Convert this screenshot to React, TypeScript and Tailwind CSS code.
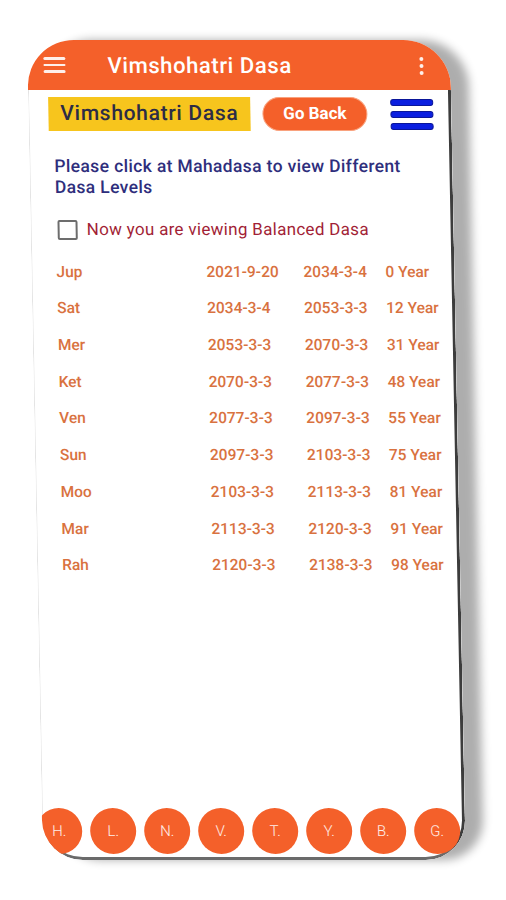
const rows = [
  ["Jup", "2021-9-20", "2034-3-4", "0 Year"],
  ["Sat", "2034-3-4", "2053-3-3", "12 Year"],
  ["Mer", "2053-3-3", "2070-3-3", "31 Year"],
  ["Ket", "2070-3-3", "2077-3-3", "48 Year"],
  ["Ven", "2077-3-3", "2097-3-3", "55 Year"],
  ["Sun", "2097-3-3", "2103-3-3", "75 Year"],
  ["Moo", "2103-3-3", "2113-3-3", "81 Year"],
  ["Mar", "2113-3-3", "2120-3-3", "91 Year"],
  ["Rah", "2120-3-3", "2138-3-3", "98 Year"],
];

const levels = ["H.", "L.", "N.", "V.", "T.", "Y.", "B.", "G."];

export default function App() {
  return (
    <div className="w-[506px] h-[900px] bg-white overflow-hidden font-['Roboto',sans-serif]">
      {/* phone screen, tilted a little like the photo */}
      <div className="ml-[27px] mt-[40px] w-[423px] h-[820px] origin-top skew-x-[1.1deg] rounded-t-[47px] rounded-b-[40px] overflow-hidden flex flex-col bg-white shadow-[18px_0_10px_rgba(0,0,0,0.32)]">
        {/* app bar */}
        <div className="h-[50px] shrink-0 bg-[#f4602a] flex items-center">
          <div className="ml-[16px] w-[22px] flex flex-col gap-[4px]">
            <span className="h-[2.5px] bg-white/90 rounded" />
            <span className="h-[2.5px] bg-white/90 rounded" />
            <span className="h-[2.5px] bg-white/90 rounded" />
          </div>
          <h1 className="ml-[42px] text-white text-[22px] font-medium tracking-[0.6px]">
            Vimshohatri Dasa
          </h1>
          <div className="ml-auto mr-[27px] flex flex-col gap-[3px] pt-[2px]">
            <span className="w-[4px] h-[4px] rounded-full bg-white/90" />
            <span className="w-[4px] h-[4px] rounded-full bg-white/90" />
            <span className="w-[4px] h-[4px] rounded-full bg-white/90" />
          </div>
        </div>

        {/* body */}
        <div className="flex-1 flex flex-col border-l border-l-[#e4e4e4] border-r-[3px] border-r-[#3c3c3c] border-b-[3px] border-b-[#6a6a6a] rounded-b-[40px]">
          <div className="mt-[7px] h-[34px] flex items-center">
            <div className="ml-[19px] w-[202px] h-[34px] bg-[#f7c51d] flex items-center justify-center text-[21px] font-medium tracking-[0.7px] text-[#2c2c46]">
              Vimshohatri Dasa
            </div>
            <button className="ml-[12px] w-[105px] h-[34px] rounded-full bg-[#f4602a] border border-[#f9a27e] text-white text-[17px] font-bold">
              Go Back
            </button>
            <div className="ml-[23px] w-[43px] flex flex-col gap-[5px]">
              <span className="h-[7px] rounded-[3px] bg-[#0b1fe0] border border-[#0a169a]" />
              <span className="h-[7px] rounded-[3px] bg-[#0b1fe0] border border-[#0a169a]" />
              <span className="h-[7px] rounded-[3px] bg-[#0b1fe0] border border-[#0a169a]" />
            </div>
          </div>

          <p className="mt-[25px] pl-[24px] pr-[10px] text-[17.5px] leading-[21px] font-medium tracking-[0.35px] text-[#2e2e7c]">
            Please click at Mahadasa to view Different Dasa Levels
          </p>

          <label className="mt-[20px] ml-[26px] h-[24px] flex items-center gap-[9px]">
            <span className="w-[20px] h-[20px] rounded-[2px] border-2 border-[#6d6d6d]" />
            <span className="text-[17px] tracking-[0.3px] text-[#a21f36]">Now you are viewing Balanced Dasa</span>
          </label>

          <div className="mt-[12px] pl-[24px] flex flex-col">
            {rows.map(([p, from, to, age]) => (
              <div
                key={p}
                className="h-[36.7px] grid grid-cols-[150px_97px_82px_auto] items-center text-[15.5px] font-medium text-[#d9723f]"
              >
                <span>{p}</span>
                <span>{from}</span>
                <span>{to}</span>
                <span>{age}</span>
              </div>
            ))}
          </div>

          {/* dasa level buttons */}
          <div className="mt-auto mb-[3px] -ml-[7px] flex gap-[8px]">
            {levels.map((l) => (
              <div
                key={l}
                className="w-[46px] h-[46px] shrink-0 rounded-full bg-[#f4602a] flex items-center justify-center text-white/90 text-[15px] font-light"
              >
                {l}
              </div>
            ))}
          </div>
        </div>
      </div>
    </div>
  );
}
